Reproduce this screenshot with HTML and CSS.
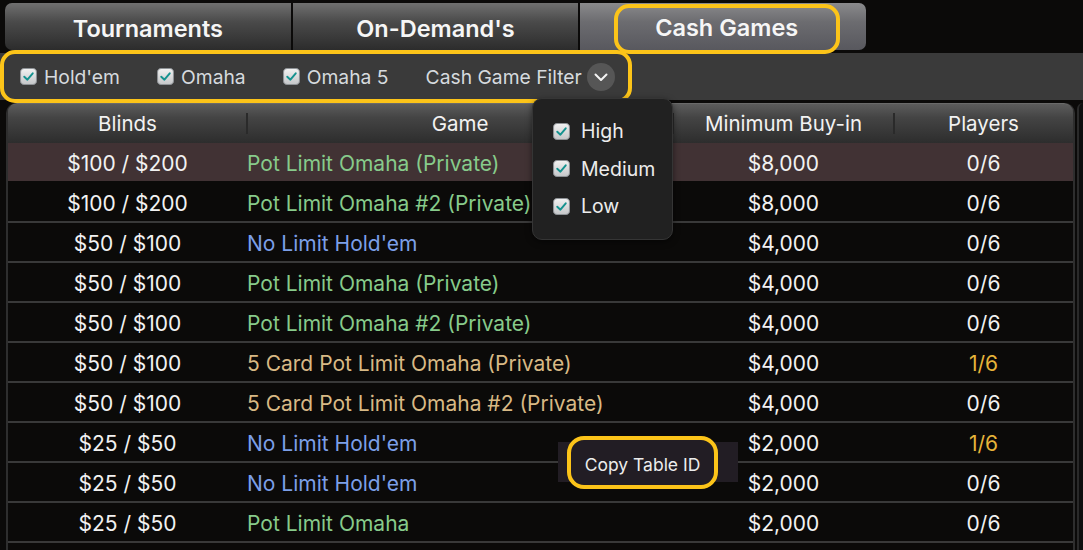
FILE: index.html
```html
<!DOCTYPE html>
<html>
<head>
<meta charset="utf-8">
<link rel="stylesheet" href="styles.css">
</head>
<body>
<div class="app">
  <div class="tabs">
    <div class="tab first">Tournaments</div>
    <div class="tab">On-Demand's</div>
    <div class="tab active last"><span class="tab-hl">Cash Games</span></div>
  </div>

  <div class="filterbar">
    <div class="filter-group">
      <label class="chk"><svg class="box" viewBox="0 0 16 16"><defs><linearGradient id="cg" x1="0" y1="0" x2="0" y2="1"><stop offset="0" stop-color="#f2f2f2"/><stop offset="1" stop-color="#c4c6c8"/></linearGradient></defs><rect x="0.5" y="0.5" width="15" height="15" rx="3.5" fill="url(#cg)" stroke="#8e9296"/><path d="M4 8.2 L7 11 L12 5" fill="none" stroke="#14928f" stroke-width="1.8" stroke-linecap="round" stroke-linejoin="round"/></svg><span>Hold'em</span></label>
      <label class="chk"><svg class="box" viewBox="0 0 16 16"><rect x="0.5" y="0.5" width="15" height="15" rx="3.5" fill="url(#cg)" stroke="#8e9296"/><path d="M4 8.2 L7 11 L12 5" fill="none" stroke="#14928f" stroke-width="1.8" stroke-linecap="round" stroke-linejoin="round"/></svg><span>Omaha</span></label>
      <label class="chk"><svg class="box" viewBox="0 0 16 16"><rect x="0.5" y="0.5" width="15" height="15" rx="3.5" fill="url(#cg)" stroke="#8e9296"/><path d="M4 8.2 L7 11 L12 5" fill="none" stroke="#14928f" stroke-width="1.8" stroke-linecap="round" stroke-linejoin="round"/></svg><span>Omaha 5</span></label>
      <div class="cgf"><span>Cash Game Filter</span><span class="chev"><svg viewBox="0 0 28 28"><path d="M8.5 11.5 L14 17 L19.5 11.5" fill="none" stroke="#f4f4f4" stroke-width="2" stroke-linecap="round" stroke-linejoin="round"/></svg></span></div>
    </div>
  </div>

  <div class="main">
    <div class="table">
      <div class="thead">
        <div class="c c1">Blinds</div>
        <div class="c c2 hc">Game</div>
        <div class="c c3">Minimum Buy-in</div>
        <div class="c c4">Players</div>
      </div>
      <div class="row sel"><div class="c c1">$100 / $200</div><div class="c c2 g">Pot Limit Omaha (Private)</div><div class="c c3">$8,000</div><div class="c c4">0/6</div></div>
      <div class="row"><div class="c c1">$100 / $200</div><div class="c c2 g">Pot Limit Omaha #2 (Private)</div><div class="c c3">$8,000</div><div class="c c4">0/6</div></div>
      <div class="row"><div class="c c1">$50 / $100</div><div class="c c2 b">No Limit Hold'em</div><div class="c c3">$4,000</div><div class="c c4">0/6</div></div>
      <div class="row"><div class="c c1">$50 / $100</div><div class="c c2 g">Pot Limit Omaha (Private)</div><div class="c c3">$4,000</div><div class="c c4">0/6</div></div>
      <div class="row"><div class="c c1">$50 / $100</div><div class="c c2 g">Pot Limit Omaha #2 (Private)</div><div class="c c3">$4,000</div><div class="c c4">0/6</div></div>
      <div class="row"><div class="c c1">$50 / $100</div><div class="c c2 t">5 Card Pot Limit Omaha (Private)</div><div class="c c3">$4,000</div><div class="c c4 y">1/6</div></div>
      <div class="row"><div class="c c1">$50 / $100</div><div class="c c2 t">5 Card Pot Limit Omaha #2 (Private)</div><div class="c c3">$4,000</div><div class="c c4">0/6</div></div>
      <div class="row"><div class="c c1">$25 / $50</div><div class="c c2 b">No Limit Hold'em</div><div class="c c3">$2,000</div><div class="c c4 y">1/6</div></div>
      <div class="row"><div class="c c1">$25 / $50</div><div class="c c2 b">No Limit Hold'em</div><div class="c c3">$2,000</div><div class="c c4">0/6</div></div>
      <div class="row"><div class="c c1">$25 / $50</div><div class="c c2 g">Pot Limit Omaha</div><div class="c c3">$2,000</div><div class="c c4">0/6</div></div>
      <div class="row"><div class="c c1"></div><div class="c c2"></div><div class="c c3"></div><div class="c c4"></div></div>
    </div>
    <div class="scroll"></div>
  </div>

  <div class="dropdown">
    <label class="ditem"><svg class="box" viewBox="0 0 16 16"><rect x="0.5" y="0.5" width="15" height="15" rx="3.5" fill="url(#cg)" stroke="#8e9296"/><path d="M4 8.2 L7 11 L12 5" fill="none" stroke="#14928f" stroke-width="1.8" stroke-linecap="round" stroke-linejoin="round"/></svg><span>High</span></label>
    <label class="ditem"><svg class="box" viewBox="0 0 16 16"><rect x="0.5" y="0.5" width="15" height="15" rx="3.5" fill="url(#cg)" stroke="#8e9296"/><path d="M4 8.2 L7 11 L12 5" fill="none" stroke="#14928f" stroke-width="1.8" stroke-linecap="round" stroke-linejoin="round"/></svg><span>Medium</span></label>
    <label class="ditem"><svg class="box" viewBox="0 0 16 16"><rect x="0.5" y="0.5" width="15" height="15" rx="3.5" fill="url(#cg)" stroke="#8e9296"/><path d="M4 8.2 L7 11 L12 5" fill="none" stroke="#14928f" stroke-width="1.8" stroke-linecap="round" stroke-linejoin="round"/></svg><span>Low</span></label>
  </div>

  <div class="tip-bg"></div>
  <div class="tip">Copy Table ID</div>
</div>
</body>
</html>
```

FILE: styles.css
```css
* { box-sizing: border-box; }
html, body { margin: 0; padding: 0; }
body {
  background: #0b0a09;
  font-family: Inter, "Noto Sans", "Liberation Sans", sans-serif;
  color: #f0f0f0;
  width: 1083px;
  height: 550px;
  overflow: hidden;
}
.app { position: relative; padding-top: 3px; height: 550px; overflow: hidden; }

.tabs {
  display: flex;
  margin-left: 5px;
  width: 861px;
  height: 47px;
  gap: 2px;
  position: relative;
  z-index: 2;
}
.tab {
  flex: 1;
  display: flex;
  align-items: center;
  justify-content: center;
  padding-top: 3px;
  font-size: 23.5px;
  font-weight: 600;
  color: #f6f6f6;
  background: linear-gradient(#707070 0%, #4a4a4a 40%, #2c2c2c 100%);
}
.tab.first { border-radius: 7px 0 0 7px; }
.tab.last { border-radius: 0 7px 7px 0; }
.tab.active {
  background: linear-gradient(#8a8a8c 0%, #6c6c70 40%, #58585e 100%);
  align-items: flex-start;
  padding-top: 1px;
}
.tab-hl {
  display: flex;
  align-items: center;
  justify-content: center;
  width: 226px;
  height: 50px;
  margin-left: 7px;
  border: 4px solid #fcc419;
  border-radius: 15px;
  padding-bottom: 3px;
}

.filterbar {
  margin-top: 3px;
  height: 47px;
  background: #3a3a3a;
  display: flex;
  align-items: center;
}
.filter-group {
  display: flex;
  align-items: center;
  width: 632px;
  height: 53px;
  border: 4px solid #fcc419;
  border-radius: 15px;
  padding-left: 16px;
  gap: 37px;
  font-size: 19.3px;
  color: #d6dade;
  position: relative;
  z-index: 1;
}
.chk { display: flex; align-items: center; gap: 7px; }
.box { width: 17px; height: 17px; display: block; }
.cgf { display: flex; align-items: center; gap: 5px; }
.chev {
  width: 28px;
  height: 28px;
  border-radius: 50%;
  background: #565656;
  display: block;
}
.chev svg { width: 28px; height: 28px; display: block; }

.main {
  display: flex;
  gap: 2px;
  margin-top: 3px;
  padding-left: 6px;
}
.table {
  width: 1069px;
  border-left: 2px solid #2e2e2e;
  border-right: 2px solid #2e2e2e;
  border-radius: 10px 10px 0 0;
}
.scroll {
  width: 6px;
  height: 460px;
  border-left: 2px solid #2a2a2a;
  border-radius: 6px 0 0 0;
  background: #0e0e0e;
}
.thead {
  display: flex;
  height: 40px;
  border-radius: 9px 9px 0 0;
  background: linear-gradient(#5c5c5c 0%, #444 35%, #2d2d2d 100%);
  border-top: 1px solid #6a6a6a;
  font-size: 20.5px;
  color: #f2f2f2;
}
.thead .c { position: relative; }
.thead .c1::after, .thead .c2::after, .thead .c3::after {
  content: "";
  position: absolute;
  right: -1px;
  top: 9px;
  bottom: 9px;
  width: 2px;
  background: #2a2a2a;
}
.row {
  display: flex;
  height: 40px;
  border-bottom: 2px solid #393939;
  font-size: 21px;
  color: #f2f2f2;
}
.row .c { padding-top: 3px; }
.row.sel { background: #413234; border-bottom-color: #0b0a09; }
.c { display: flex; align-items: center; justify-content: center; white-space: nowrap; }
.c1 { width: 239px; }
.c2 { width: 426px; justify-content: flex-start; padding-left: 0; }
.c2.hc { justify-content: center; }
.c3 { width: 221px; }
.c4 { flex: 1; }
.g { color: #87cb8b; }
.b { color: #7c9fe8; }
.t { color: #d8b985; }
.y { color: #e6b43a; }

.dropdown {
  position: absolute;
  left: 532px;
  top: 98px;
  width: 141px;
  height: 142px;
  background: #212121;
  border: 1px solid #353535;
  border-radius: 10px;
  padding-top: 18px;
  padding-left: 20px;
  display: flex;
  flex-direction: column;
  gap: 9px;
  font-size: 19.5px;
  color: #ececec;
  box-shadow: 0 2px 6px rgba(0,0,0,0.5);
  z-index: 3;
}
.ditem { display: flex; align-items: center; gap: 11px; height: 28.5px; }

.tip-bg {
  position: absolute;
  left: 558px;
  top: 442px;
  width: 180px;
  height: 40px;
  background: #221d24;
}
.tip {
  position: absolute;
  left: 567px;
  top: 436px;
  width: 151px;
  height: 53px;
  border: 4px solid #fcc419;
  border-radius: 17px;
  background: #221d24;
  display: flex;
  align-items: center;
  justify-content: center;
  padding-top: 4px;
  font-size: 17.5px;
  color: #ececec;
}
```
